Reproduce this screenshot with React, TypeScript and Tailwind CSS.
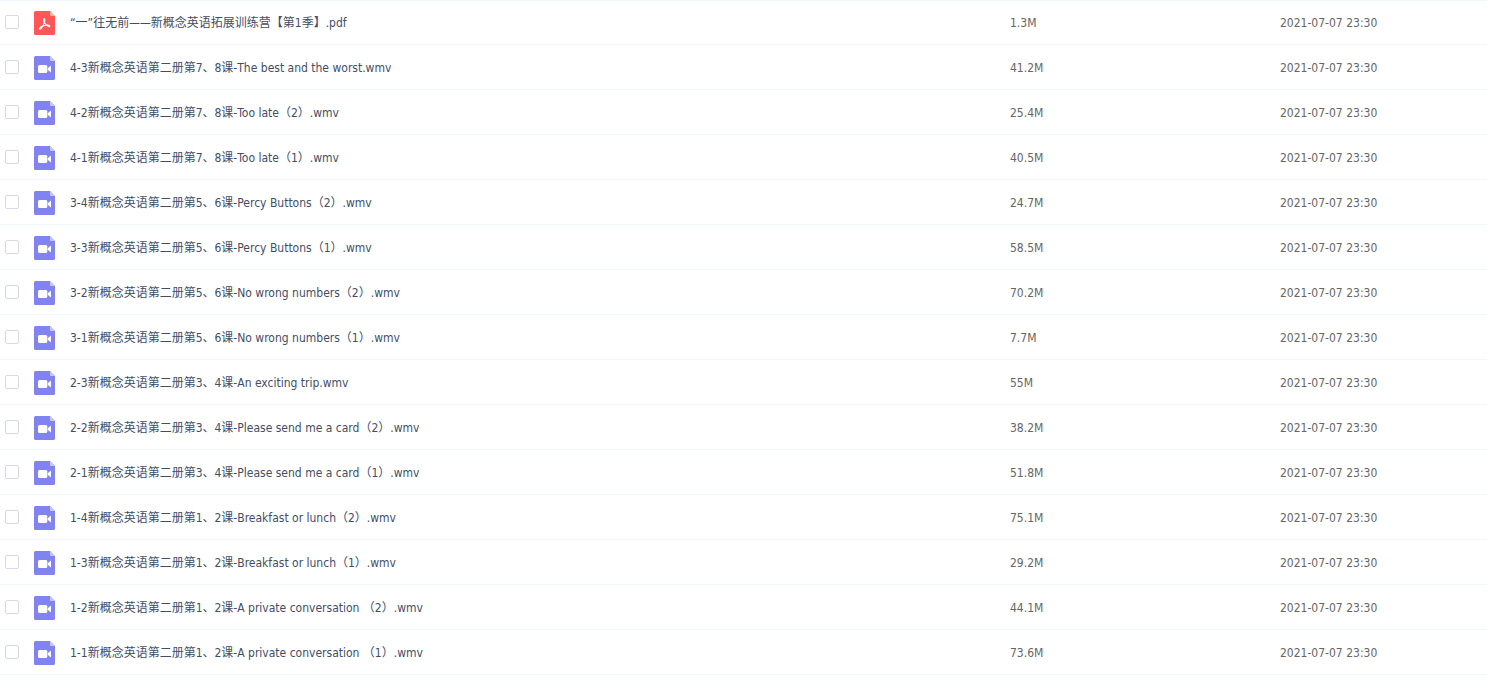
type FileItem = {
  name: string;
  size: string;
  type: "pdf" | "video";
};

const files: FileItem[] = [
  { name: "“一”往无前——新概念英语拓展训练营【第1季】.pdf", size: "1.3M", type: "pdf" },
  { name: "4-3新概念英语第二册第7、8课-The best and the worst.wmv", size: "41.2M", type: "video" },
  { name: "4-2新概念英语第二册第7、8课-Too late（2）.wmv", size: "25.4M", type: "video" },
  { name: "4-1新概念英语第二册第7、8课-Too late（1）.wmv", size: "40.5M", type: "video" },
  { name: "3-4新概念英语第二册第5、6课-Percy Buttons（2）.wmv", size: "24.7M", type: "video" },
  { name: "3-3新概念英语第二册第5、6课-Percy Buttons（1）.wmv", size: "58.5M", type: "video" },
  { name: "3-2新概念英语第二册第5、6课-No wrong numbers（2）.wmv", size: "70.2M", type: "video" },
  { name: "3-1新概念英语第二册第5、6课-No wrong numbers（1）.wmv", size: "7.7M", type: "video" },
  { name: "2-3新概念英语第二册第3、4课-An exciting trip.wmv", size: "55M", type: "video" },
  { name: "2-2新概念英语第二册第3、4课-Please send me a card（2）.wmv", size: "38.2M", type: "video" },
  { name: "2-1新概念英语第二册第3、4课-Please send me a card（1）.wmv", size: "51.8M", type: "video" },
  { name: "1-4新概念英语第二册第1、2课-Breakfast or lunch（2）.wmv", size: "75.1M", type: "video" },
  { name: "1-3新概念英语第二册第1、2课-Breakfast or lunch（1）.wmv", size: "29.2M", type: "video" },
  { name: "1-2新概念英语第二册第1、2课-A private conversation （2）.wmv", size: "44.1M", type: "video" },
  { name: "1-1新概念英语第二册第1、2课-A private conversation （1）.wmv", size: "73.6M", type: "video" },
];

function PdfIcon() {
  return (
    <svg className="h-6 w-[21px] shrink-0" viewBox="0 0 21 24" fill="none">
      <path d="M1.5 0H16l5 5v17.5a1.5 1.5 0 0 1-1.5 1.5h-18A1.5 1.5 0 0 1 0 22.5v-21A1.5 1.5 0 0 1 1.5 0z" fill="#ff5757" />
      <path d="M16 0l5 5h-4a1 1 0 0 1-1-1z" fill="#ffb3b3" />
      <path
        d="M10.2 7.6c-1 .1-.8 1.5-.3 2.9.8 2 2.4 4 4.5 5 1 .4 1.7-.2 1.2-.8-.9-.9-3.8-.6-5.8-.1-1.7.4-3.7 1.5-4.2 2.7-.3 1 .8 1.3 1.6.2 1.2-1.5 2.7-4.2 3.3-6.3.4-1.5.6-3.500-.3-3.600z"
        stroke="#fff"
        strokeWidth="1.1"
        strokeLinejoin="round"
      />
    </svg>
  );
}

function VideoIcon() {
  return (
    <svg className="h-6 w-[21px] shrink-0" viewBox="0 0 21 24" fill="none">
      <path d="M1.5 0H16l5 5v17.5a1.5 1.5 0 0 1-1.5 1.5h-18A1.5 1.5 0 0 1 0 22.5v-21A1.5 1.5 0 0 1 1.5 0z" fill="#8183f1" />
      <path d="M16 0l5 5h-4a1 1 0 0 1-1-1z" fill="#c6c7fa" />
      <rect x="4" y="9" width="9.3" height="8" rx="1.5" fill="#fff" />
      <path d="M17 9.5v7l-3.3-2.7v-1.6z" fill="#fff" />
    </svg>
  );
}

const cell = "border-b border-[#f1f5fd] p-0 pt-0.5 group-first:border-t group-first:pt-px";

function FileRow({ file, id }: { file: FileItem; id: string }) {
  return (
    <tr className="group">
      <td className={`h-[45px] ${cell}`}>
        <div className="flex items-center pl-[5px]">
          <input
            id={id}
            type="checkbox"
            className="mr-[15px] mb-0.5 size-3.5 shrink-0 appearance-none rounded-xs border border-[#d5dae6] bg-white checked:bg-[#8183f1]"
          />
          {file.type === "pdf" ? <PdfIcon /> : <VideoIcon />}
          <label htmlFor={id} className="ml-[15px] truncate text-[#424e67]">
            {file.name}
          </label>
        </div>
      </td>
      <td className={cell}>{file.size}</td>
      <td className={cell}>2021-07-07 23:30</td>
    </tr>
  );
}

function App() {
  return (
    <main className="min-h-screen bg-white font-['DejaVu_Sans_Condensed','Noto_Sans_CJK_SC',sans-serif] text-xs text-[#666666]">
      <table className="w-full table-fixed border-separate border-spacing-0">
        <colgroup>
          <col />
          <col className="w-[270px]" />
          <col className="w-[207px]" />
        </colgroup>
        <tbody>
          {files.map((file, index) => (
            <FileRow key={file.name} file={file} id={`file-${index}`} />
          ))}
        </tbody>
      </table>
    </main>
  );
}

export default App;
